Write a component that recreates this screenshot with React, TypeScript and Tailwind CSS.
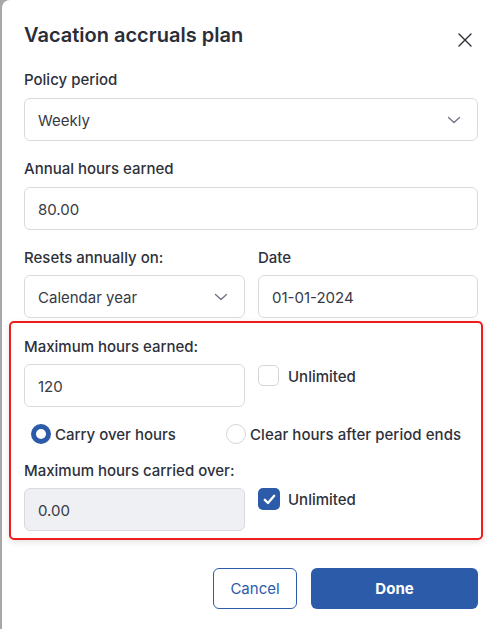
import React from "react";

const Chevron = () => (
  <svg width="14" height="8" viewBox="0 0 14 8" fill="none" className="shrink-0">
    <path d="M1.5 1.5 7 6.5l5.5-5" stroke="#6e7083" strokeWidth="1.3" strokeLinecap="round" strokeLinejoin="round" />
  </svg>
);

const Label = ({ children }: { children: React.ReactNode }) => (
  <div className="h-5 pt-[1px] text-[15px] leading-5 font-medium text-[#2e313b]">{children}</div>
);

const Field = ({
  value,
  select,
  disabled,
}: {
  value: string;
  select?: boolean;
  disabled?: boolean;
}) => (
  <div
    className={`h-[43px] flex items-center justify-between pl-[13px] pr-4 rounded-md border border-[#dcd9de] text-[15px] text-[#373a45] ${
      disabled ? "bg-[#eef0f3]" : "bg-white"
    }`}
  >
    <span className="pt-[3px]">{value}</span>
    {select && <Chevron />}
  </div>
);

const Checkbox = ({ checked }: { checked?: boolean }) =>
  checked ? (
    <div className="w-[22px] h-[22px] shrink-0 rounded-[5px] bg-[#2c5ba9] flex items-center justify-center">
      <svg width="13" height="11" viewBox="0 0 13 11" fill="none">
        <path d="M1.8 5.8 5 9 11.2 1.8" stroke="white" strokeWidth="2.4" strokeLinecap="round" strokeLinejoin="round" />
      </svg>
    </div>
  ) : (
    <div className="w-[21px] h-[21px] shrink-0 rounded-[5px] border border-[#d6d4d8] bg-white" />
  );

const Radio = ({ checked }: { checked?: boolean }) =>
  checked ? (
    <div className="w-5 h-5 shrink-0 rounded-full border-[5px] border-[#2c5ba9] bg-white" />
  ) : (
    <div className="w-5 h-5 shrink-0 rounded-full border border-[#d6d4d8] bg-white" />
  );

export default function App() {
  return (
    <div
      className="w-[500px] h-[629px] bg-[#a8a8a8] pl-[2px] overflow-hidden"
      style={{ fontFamily: "Inter, 'Noto Sans', sans-serif" }}
    >
      <div className="h-full bg-white rounded-tl-lg pl-[22px] pr-[22px] pt-[21px] flex flex-col">
        {/* Header */}
        <div className="flex items-start justify-between">
          <h1 className="text-[20px] leading-7 font-semibold text-[#2b2e38]">Vacation accruals plan</h1>
          <button className="mt-[12px] mr-[6px]">
            <svg width="14" height="14" viewBox="0 0 14 14" fill="none">
              <path d="M1 1l12 12M13 1 1 13" stroke="#2b2e38" strokeWidth="1.4" strokeLinecap="round" />
            </svg>
          </button>
        </div>

        <div className="mt-5">
          <Label>Policy period</Label>
          <div className="mt-[9px]">
            <Field value="Weekly" select />
          </div>
        </div>

        <div className="mt-[17px]">
          <Label>Annual hours earned</Label>
          <div className="mt-[9px]">
            <Field value="80.00" />
          </div>
        </div>

        <div className="mt-[17px] grid grid-cols-[221px_220px] gap-x-[13px]">
          <div>
            <Label>Resets annually on:</Label>
            <div className="mt-2">
              <Field value="Calendar year" select />
            </div>
          </div>
          <div>
            <Label>Date</Label>
            <div className="mt-2">
              <Field value="01-01-2024" />
            </div>
          </div>
        </div>

        {/* Highlighted section */}
        <div className="mt-[3px] -ml-[15px] -mr-[5px] border-2 border-[#ee1c1c] rounded-[5px] pl-[13px] pr-[3px] pt-[13px] pb-[7px] shadow-[0_2px_6px_rgba(0,0,0,0.12)]">
          <Label>Maximum hours earned:</Label>
          <div className="mt-[8px] grid grid-cols-[221px_1fr] gap-x-[13px]">
            <Field value="120" />
            <div className="flex items-start gap-[9px] pt-[1px]">
              <Checkbox />
              <span className="pt-[2px] text-[15px] leading-5 font-medium text-[#2e313b]">Unlimited</span>
            </div>
          </div>

          <div className="mt-[17px] flex items-center h-5">
            <div className="flex items-center gap-1 ml-[7px] w-[195px]">
              <Radio checked />
              <span className="pt-[2px] text-[15px] font-medium text-[#2e313b]">Carry over hours</span>
            </div>
            <div className="flex items-center gap-1">
              <Radio />
              <span className="pt-[2px] text-[15px] font-medium text-[#2e313b] tracking-[0.05px]">
                Clear hours after period ends
              </span>
            </div>
          </div>

          <div className="mt-[16px]">
            <Label>Maximum hours carried over:</Label>
          </div>
          <div className="mt-[8px] grid grid-cols-[221px_1fr] gap-x-[13px]">
            <Field value="0.00" disabled />
            <div className="flex items-start gap-[8px]">
              <Checkbox checked />
              <span className="pt-[2px] text-[15px] leading-5 font-medium text-[#2e313b]">Unlimited</span>
            </div>
          </div>
        </div>

        {/* Footer */}
        <div className="mt-[28px] flex justify-end gap-[14px]">
          <button className="w-[84px] h-[41px] pt-[2px] rounded-md border border-[#2c5ba9] text-[15px] text-[#2c5ba9] bg-white">
            Cancel
          </button>
          <button className="w-[167px] h-[41px] pt-[2px] rounded-md bg-[#2c5ba9] text-[15px] font-bold text-white">
            Done
          </button>
        </div>
      </div>
    </div>
  );
}
